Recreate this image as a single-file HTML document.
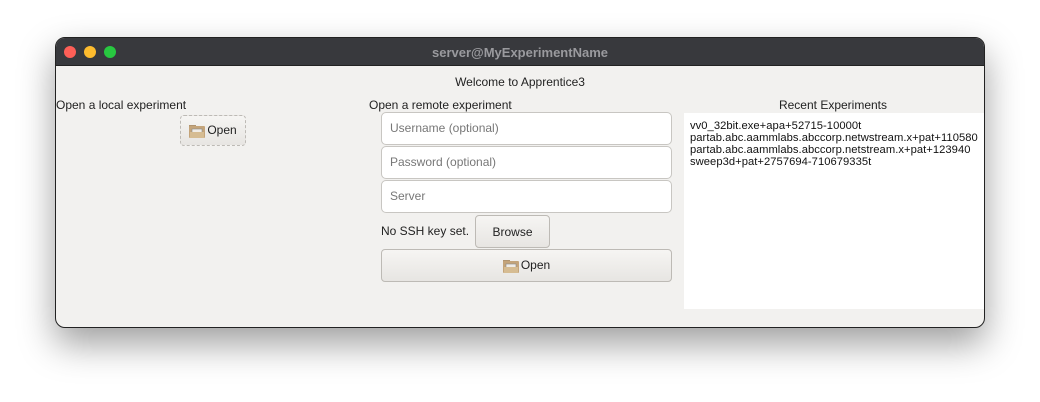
<!DOCTYPE html>
<html><head><meta charset="utf-8"><style>
*{box-sizing:border-box;margin:0;padding:0}
body{width:1040px;height:402px;background:#fff;position:relative;overflow:hidden;font-family:"Liberation Sans",sans-serif;font-size:12px;color:#222}
.win{position:absolute;left:55px;top:37px;width:930px;height:291px;border-radius:10px;background:#f2f1ef;border:1px solid #222;overflow:hidden;box-shadow:0 16px 36px rgba(0,0,0,.38)}
.tb{position:absolute;left:0;top:0;width:100%;height:28px;background:#38393d;border-bottom:1px solid #222}
.tb .t{position:absolute;left:0;right:0;top:7px;text-align:center;color:#9a9a9e;font-weight:bold;font-size:13px}
.dot{position:absolute;top:8px;width:12px;height:12px;border-radius:50%}
.a{position:absolute;white-space:nowrap}
.inp{position:absolute;left:325px;width:291px;height:33px;background:#fff;border:1px solid #c8c6c2;border-radius:5px;color:#777;padding:8px 0 0 8px;font-size:12px}
.btn{position:absolute;border:1px solid #bdbab5;border-radius:4px;background:linear-gradient(#f6f5f3,#e7e5e2);text-align:center}
.fold{display:inline-block;vertical-align:middle;width:16px;height:14px;position:relative;margin-right:2px}
.list{position:absolute;left:628px;top:75px;width:302px;height:196px;background:#fff;padding:7px 0 0 6px;font-size:11.2px;line-height:12px;color:#111;letter-spacing:.05px}
</style></head><body>
<div class="win">
<div class="tb"><div class="dot" style="left:8px;background:#fe5f57"></div><div class="dot" style="left:28px;background:#febc2e"></div><div class="dot" style="left:48px;background:#28c840"></div><div class="t">server@MyExperimentName</div></div>
<div class="a" style="left:0;right:0;top:37px;text-align:center">Welcome to Apprentice3</div>
<div class="a" style="left:0;top:60px">Open a local experiment</div>
<div class="btn" style="left:124px;top:77px;width:66px;height:31px;border-style:dashed;padding-top:7px"><span class="fold"><svg width="16" height="14"><rect x="0" y="1" width="7" height="3" fill="#b09470"/><rect x="0" y="2" width="16" height="12" rx="1" fill="#c4a47a"/><rect x="3" y="5" width="10" height="4" fill="#f0ece6" stroke="#888" stroke-width=".6"/><rect x="1" y="8" width="14" height="6" fill="#d6bc92"/></svg></span>Open</div>
<div class="a" style="left:313px;top:60px">Open a remote experiment</div>
<div class="inp" style="top:74px">Username (optional)</div>
<div class="inp" style="top:108px">Password (optional)</div>
<div class="inp" style="top:142px">Server</div>
<div class="a" style="left:325px;top:186px">No SSH key set.</div>
<div class="btn" style="left:419px;top:177px;width:75px;height:33px;padding-top:9px">Browse</div>
<div class="btn" style="left:325px;top:211px;width:291px;height:33px;padding-top:8px"><span class="fold"><svg width="16" height="14"><rect x="0" y="1" width="7" height="3" fill="#b09470"/><rect x="0" y="2" width="16" height="12" rx="1" fill="#c4a47a"/><rect x="3" y="5" width="10" height="4" fill="#f0ece6" stroke="#888" stroke-width=".6"/><rect x="1" y="8" width="14" height="6" fill="#d6bc92"/></svg></span>Open</div>
<div class="a" style="left:628px;width:298px;top:60px;text-align:center">Recent Experiments</div>
<div class="list">vv0_32bit.exe+apa+52715-10000t<br>partab.abc.aammlabs.abccorp.netwstream.x+pat+110580<br>partab.abc.aammlabs.abccorp.netstream.x+pat+123940<br>sweep3d+pat+2757694-710679335t</div>
</div>
</body></html>
